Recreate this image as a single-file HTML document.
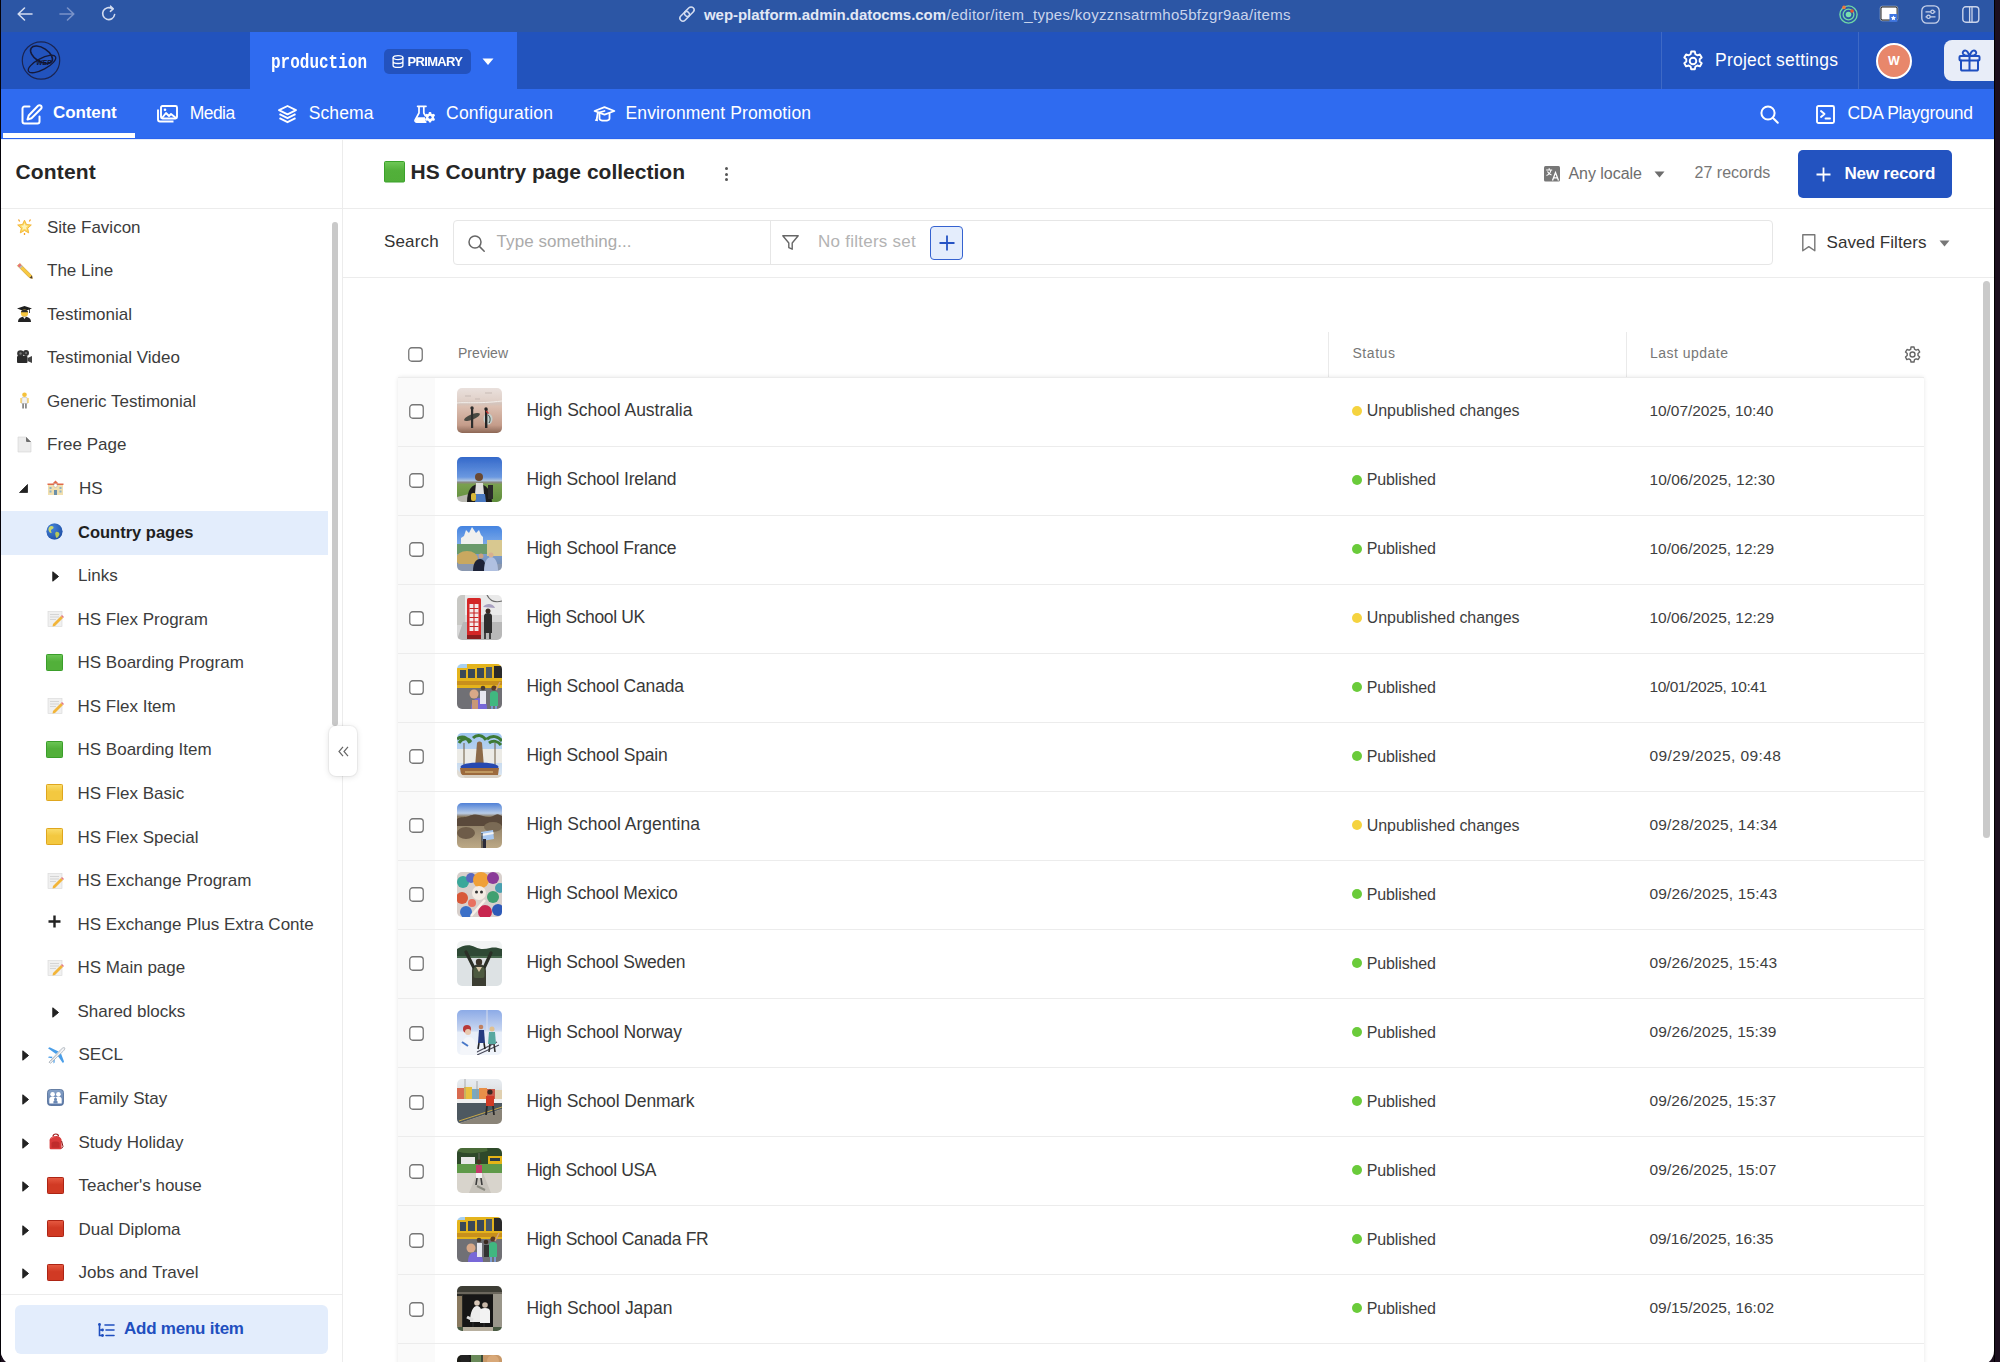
<!DOCTYPE html>
<html><head><meta charset="utf-8">
<style>
*{box-sizing:border-box;margin:0;padding:0}
html,body{width:2000px;height:1362px;overflow:hidden;background:#1c0f1e;font-family:"Liberation Sans",sans-serif}
#win{position:absolute;left:1px;top:0;width:1993px;height:1365px;background:#fff;border-radius:0 0 14px 14px;overflow:hidden}
#edgeL{position:absolute;left:0;top:0;width:1px;height:1362px;background:#050208}
#edgeR{position:absolute;left:1994px;top:0;width:1px;height:1362px;background:#000}
.abs{position:absolute}
.t{position:absolute;white-space:nowrap;line-height:1}
svg{position:absolute;overflow:visible}
</style></head><body>
<div id="edgeL"></div><div id="edgeR"></div>
<div id="win">
<div class="abs" style="left:0px;top:0px;width:1993px;height:32px;background:#2c56a5;"></div>
<svg style="left:16px;top:7px;" width="16" height="14" viewBox="0 0 16 14"><path d="M15 7H1.5M7.5 1L1.2 7l6.3 6" fill="none" stroke="#d3dcf0" stroke-width="1.6" stroke-linecap="round" stroke-linejoin="round"/></svg>
<svg style="left:58px;top:7px;" width="16" height="14" viewBox="0 0 16 14"><path d="M1 7h13.5M8.5 1l6.3 6-6.3 6" fill="none" stroke="#7a93c9" stroke-width="1.6" stroke-linecap="round" stroke-linejoin="round"/></svg>
<svg style="left:100px;top:5px;" width="17" height="18" viewBox="0 0 17 18"><path d="M13.6 9.5a6 6 0 1 1-2.2-5.6" fill="none" stroke="#d3dcf0" stroke-width="1.6" stroke-linecap="round"/><path d="M9.6 1.2l2.6 2.7-2.8 2.4" fill="none" stroke="#d3dcf0" stroke-width="1.6" stroke-linecap="round" stroke-linejoin="round"/></svg>
<svg style="left:678px;top:6px;" width="16" height="16" viewBox="0 0 16 16"><g fill="none" stroke="#d3dcf0" stroke-width="1.5"><rect x="7.3" y="0.2" width="6" height="11" rx="3" transform="rotate(45 10.3 5.7)"/><rect x="2.7" y="4.8" width="6" height="11" rx="3" transform="rotate(45 5.7 10.3)"/></g></svg>
<div class="t" style="left:703px;top:6.70px;font-size:15px;font-weight:bold;color:#e2e8f5;font-family:'Liberation Sans';letter-spacing:-0.047px;">wep-platform.admin.datocms.com</div>
<div class="t" style="left:945.5px;top:6.70px;font-size:15px;font-weight:normal;color:#c9d4ec;font-family:'Liberation Sans';letter-spacing:0.301px;">/editor/item_types/koyzznsatrmho5bfzgr9aa/items</div>
<svg style="left:1838px;top:5px;" width="19" height="19" viewBox="0 0 19 19"><circle cx="9.5" cy="9.5" r="8.6" fill="none" stroke="#6fd7a6" stroke-width="1.4"/><circle cx="9.5" cy="9.5" r="5.4" fill="none" stroke="#6fd7a6" stroke-width="1.3"/><circle cx="9.5" cy="9.5" r="2.8" fill="#79dfb0"/><circle cx="5" cy="2.4" r="1.8" fill="#f07a3a"/><circle cx="13" cy="6" r="1.8" fill="#e8552e"/></svg>
<svg style="left:1879px;top:6px;" width="19" height="17" viewBox="0 0 19 17"><rect x="0.8" y="0.8" width="16.5" height="13.5" rx="1.5" fill="#fff" stroke="#222" stroke-width="1.4"/><rect x="0.2" y="0.2" width="17.6" height="14.6" rx="2" fill="none" stroke="#cfd6e6" stroke-width="0.6"/><rect x="9.5" y="8" width="7.8" height="7.8" fill="#3d74e0"/><path d="M13.4 9.4l.8 1.7 1.8.2-1.3 1.2.4 1.8-1.7-.9-1.6.9.3-1.8-1.3-1.2 1.8-.2z" fill="#fff"/></svg>
<svg style="left:1920px;top:5px;" width="19" height="19" viewBox="0 0 19 19"><rect x="0.8" y="0.8" width="17.4" height="17.4" rx="5" fill="none" stroke="#c9d3ea" stroke-width="1.3"/><path d="M4.5 6.8h10M4.5 11.8h10" stroke="#c9d3ea" stroke-width="1.2"/><circle cx="11.5" cy="6.8" r="1.7" fill="#2c56a5" stroke="#c9d3ea" stroke-width="1.2"/><circle cx="7.5" cy="11.8" r="1.7" fill="#2c56a5" stroke="#c9d3ea" stroke-width="1.2"/></svg>
<svg style="left:1961px;top:6px;" width="18" height="17" viewBox="0 0 18 17"><rect x="0.8" y="0.8" width="16" height="15.4" rx="3" fill="none" stroke="#c9d3ea" stroke-width="1.4"/><path d="M7.6 1v15.2M10 1v15.2" stroke="#c9d3ea" stroke-width="1.3"/></svg>
<div class="abs" style="left:0px;top:32px;width:1993px;height:57px;background:#2253bd;"></div>
<svg style="left:20px;top:41px;" width="40" height="40" viewBox="0 0 40 40"><circle cx="20" cy="19.5" r="18.7" fill="none" stroke="#1b2552" stroke-width="1.2"/><ellipse cx="20.5" cy="13.8" rx="12.3" ry="6.8" transform="rotate(33 20.5 13.8)" fill="none" stroke="#15193a" stroke-width="1.6"/><ellipse cx="21" cy="23" rx="15.3" ry="5.6" transform="rotate(-28 21 23)" fill="none" stroke="#15193a" stroke-width="1.3"/><text x="15.3" y="23.6" font-family="Liberation Sans" font-weight="bold" font-style="italic" font-size="6.6" fill="#10142e">WEP</text></svg>
<div class="abs" style="left:249px;top:32px;width:267px;height:57px;background:#2f6bf0;"></div>
<div class="t" style="left:270px;top:52.80px;font-size:16px;font-weight:bold;color:#fff;font-family:'Liberation Mono';letter-spacing:-0.002px;transform:scaleY(1.22);transform-origin:0 0;">production</div>
<div class="abs" style="left:383px;top:49px;width:87px;height:25px;background:#2352be;border-radius:5px;"></div>
<svg style="left:391px;top:55px;" width="12" height="13" viewBox="0 0 12 13"><g fill="none" stroke="#fff" stroke-width="1.3"><ellipse cx="6" cy="2.6" rx="4.9" ry="2"/><path d="M1.1 2.6v7.8c0 1.1 2.2 2 4.9 2s4.9-.9 4.9-2V2.6M1.1 6.5c0 1.1 2.2 2 4.9 2s4.9-.9 4.9-2"/></g></svg>
<div class="t" style="left:406.5px;top:53.62px;font-size:13px;font-weight:bold;color:#fff;font-family:'Liberation Sans';letter-spacing:-0.661px;transform:scaleY(1.05);transform-origin:0 0;">PRIMARY</div>
<svg style="left:481px;top:58px;" width="12" height="8" viewBox="0 0 12 8"><path d="M0.5 0.5h11L6 7z" fill="#fff"/></svg>
<div class="abs" style="left:1660px;top:32px;width:1px;height:57px;background:rgba(255,255,255,0.13);"></div>
<div class="abs" style="left:1857px;top:32px;width:1px;height:57px;background:rgba(255,255,255,0.13);"></div>
<svg style="left:1681px;top:50px;" width="22" height="22" viewBox="0 0 22 22"><g fill="none" stroke="#fff" stroke-width="1.9" stroke-linejoin="round"><path d="M9.2 1.5h3.6l.6 2.7 1.9 1.1 2.6-.9 1.8 3.1-2 1.8v2.2l2 1.8-1.8 3.1-2.6-.9-1.9 1.1-.6 2.7H9.2l-.6-2.7-1.9-1.1-2.6.9-1.8-3.1 2-1.8V9.3l-2-1.8 1.8-3.1 2.6.9 1.9-1.1z"/><circle cx="11" cy="11" r="3.3"/></g></svg>
<div class="t" style="left:1714px;top:52.00px;font-size:17.5px;font-weight:normal;color:#fff;font-family:'Liberation Sans';letter-spacing:0.224px;">Project settings</div>
<svg style="left:1875px;top:43px;" width="36" height="36" viewBox="0 0 36 36"><circle cx="18" cy="18" r="17" fill="#e8876b" stroke="#fff" stroke-width="2"/><text x="18" y="22.2" text-anchor="middle" font-family="Liberation Sans" font-weight="bold" font-size="12.5" fill="#fff">W</text></svg>
<div class="abs" style="left:1943px;top:40px;width:60px;height:41px;background:#e8edf8;border-radius:8px 0 0 8px;"></div>
<svg style="left:1957px;top:49px;" width="23" height="23" viewBox="0 0 23 23"><g fill="none" stroke="#1f4fc0" stroke-width="2" stroke-linejoin="round" stroke-linecap="round"><rect x="1.5" y="7" width="20" height="4.6" rx="1"/><path d="M3 11.6v8.4a1.6 1.6 0 0 0 1.6 1.6h13.8a1.6 1.6 0 0 0 1.6-1.6v-8.4M11.5 7v14.6"/><path d="M11.5 7c-1.2-3.5-2.4-5.5-4.3-5.5-1.6 0-2.6 1.2-2.4 2.7.3 1.9 2.8 2.8 6.7 2.8zM11.5 7c1.2-3.5 2.4-5.5 4.3-5.5 1.6 0 2.6 1.2 2.4 2.7-.3 1.9-2.8 2.8-6.7 2.8z"/></g></svg>
<div class="abs" style="left:0px;top:89px;width:1993px;height:50px;background:#2f6bf0;"></div>
<div class="abs" style="left:2px;top:132.5px;width:132px;height:5px;background:#fff;"></div>
<svg style="left:20px;top:104px;" width="21" height="21" viewBox="0 0 21 21"><g fill="none" stroke="#fff" stroke-width="2" stroke-linecap="round" stroke-linejoin="round"><path d="M8.5 2.5H3.5a2 2 0 0 0-2 2v13a2 2 0 0 0 2 2h13a2 2 0 0 0 2-2v-5"/><path d="M17 1.8a2.1 2.1 0 0 1 3 3L10.5 14.3l-4 1.2 1.2-4z"/></g></svg>
<div class="t" style="left:52px;top:104.08px;font-size:17px;font-weight:bold;color:#fff;font-family:'Liberation Sans';letter-spacing:-0.086px;">Content</div>
<svg style="left:156px;top:105px;" width="21" height="17" viewBox="0 0 21 17"><g fill="none" stroke="#fff" stroke-width="1.9" stroke-linejoin="round"><rect x="4" y="1" width="16" height="12.5" rx="1.5"/><path d="M1 4.5v10a2 2 0 0 0 2 2h13.5"/><path d="M5 13l4-5 3 3 2-2 5 4"/></g><circle cx="8" cy="4.8" r="1.3" fill="#fff"/></svg>
<div class="t" style="left:188.7px;top:105.10px;font-size:17.5px;font-weight:normal;color:#fff;font-family:'Liberation Sans';letter-spacing:-0.543px;">Media</div>
<svg style="left:276.5px;top:105px;" width="19" height="19" viewBox="0 0 19 19"><g fill="none" stroke="#fff" stroke-width="1.9" stroke-linejoin="round"><path d="M9.5 1L18 5.2 9.5 9.4 1 5.2z"/><path d="M1.5 9.2l8 4 8-4M1.5 13.2l8 4 8-4"/></g></svg>
<div class="t" style="left:307.7px;top:105.10px;font-size:17.5px;font-weight:normal;color:#fff;font-family:'Liberation Sans';letter-spacing:0.099px;">Schema</div>
<svg style="left:413px;top:105px;" width="21" height="19" viewBox="0 0 21 19"><g fill="none" stroke="#fff" stroke-width="1.7" stroke-linejoin="round" stroke-linecap="round"><path d="M3.6 1.3h8.4M5 1.5v6.5L1.2 14.8c-.6 1.2.1 2.3 1.4 2.3h9.2M9.8 1.5v6.5l1.6 2.8"/></g><path d="M2.6 12.2h8.4l.8 5H1.2z" fill="#fff"/><g transform="translate(16 12.3)"><circle r="3.9" fill="#fff"/><g fill="#fff"><rect x="-1.3" y="-5.3" width="2.6" height="10.6" rx="0.8"/><rect x="-1.3" y="-5.3" width="2.6" height="10.6" rx="0.8" transform="rotate(60)"/><rect x="-1.3" y="-5.3" width="2.6" height="10.6" rx="0.8" transform="rotate(120)"/></g><circle r="1.5" fill="#2f6bf0"/></g></svg>
<div class="t" style="left:445px;top:105.10px;font-size:17.5px;font-weight:normal;color:#fff;font-family:'Liberation Sans';letter-spacing:0.241px;">Configuration</div>
<svg style="left:593px;top:105px;" width="21" height="17" viewBox="0 0 21 17"><g fill="none" stroke="#fff" stroke-width="1.8" stroke-linejoin="round" stroke-linecap="round"><path d="M0.6 6L10.5 2.2 20.4 6 10.5 9.6z"/><path d="M5.5 8.2v5.2c0 3 10 3 10 0V8.2"/><path d="M10.5 6L3.8 7.8 2.6 15"/></g><path d="M0.8 15.8l2-3.3 1.3 3.8z" fill="#fff"/></svg>
<div class="t" style="left:624.5px;top:105.10px;font-size:17.5px;font-weight:normal;color:#fff;font-family:'Liberation Sans';letter-spacing:0.131px;">Environment Promotion</div>
<svg style="left:1759px;top:105px;" width="19" height="19" viewBox="0 0 19 19"><g fill="none" stroke="#fff" stroke-width="2" stroke-linecap="round"><circle cx="8" cy="8" r="6.6"/><path d="M13 13l4.8 4.8"/></g></svg>
<svg style="left:1815px;top:105px;" width="19" height="19" viewBox="0 0 19 19"><g fill="none" stroke="#fff" stroke-width="1.9" stroke-linejoin="round" stroke-linecap="round"><rect x="1" y="1" width="17" height="17" rx="1.5"/><path d="M5 6l3.5 3L5 12M9.5 13.5h4.5"/></g></svg>
<div class="t" style="left:1846.5px;top:105.10px;font-size:17.5px;font-weight:normal;color:#fff;font-family:'Liberation Sans';letter-spacing:-0.299px;">CDA Playground</div>
<div class="abs" style="left:0px;top:138px;width:1993px;height:1px;background:#2a63ee;"></div>
<div class="abs" style="left:0px;top:139px;width:1993px;height:1px;background:#e6ecfa;"></div>
<div class="abs" style="left:0px;top:140px;width:342px;height:1222px;background:#fff;"></div>
<div class="abs" style="left:341px;top:139px;width:1px;height:1223px;background:#ececec;"></div>
<div class="t" style="left:14.5px;top:161.44px;font-size:21px;font-weight:bold;color:#262626;font-family:'Liberation Sans';letter-spacing:0.162px;">Content</div>
<div class="abs" style="left:0px;top:208px;width:1993px;height:1px;background:#ececec;"></div>
<div class="abs" style="left:0px;top:511px;width:327px;height:44px;background:#e3edfc;"></div>
<svg style="left:15px;top:218.0px;" width="17" height="17" viewBox="0 0 17 17"><path d="M8.5 2.2l2 4.3 4.8.5-3.6 3.2 1 4.7-4.2-2.4-4.2 2.4 1-4.7L1.7 7l4.8-.5z" fill="#fbd860" stroke="#f3b331" stroke-width="0.9" stroke-linejoin="round"/><path d="M8.5 5l1 2.5 2.6.3-2 1.7.6 2.6-2.2-1.3-2.2 1.3.6-2.6-2-1.7 2.6-.3z" fill="#fff3b8"/><path d="M2.5 1.5l1.2 2M14.5 1.5l-1.2 2M8.5 15v2" stroke="#f3a32a" stroke-width="1.3"/></svg>
<div class="t" style="left:46px;top:218.58px;font-size:17px;font-weight:normal;color:#3c3c3c;font-family:'Liberation Sans';">Site Favicon</div>
<svg style="left:15px;top:261.6px;" width="17" height="17" viewBox="0 0 17 17"><path d="M1.5 3.8L3.8 1.5l11.7 11.7.9 3.2-3.2-.9z" fill="#f7c940" stroke="#c8901a" stroke-width="0.6"/><path d="M1.5 3.8L3.8 1.5l1.8 1.8-2.3 2.3z" fill="#e7717d"/><path d="M3.3 5.6l2.3-2.3 1 1-2.3 2.3z" fill="#b0b8c8"/><path d="M13.6 16l2.8.4-.4-2.8z" fill="#4a3a30"/></svg>
<div class="t" style="left:46px;top:262.15px;font-size:17px;font-weight:normal;color:#3c3c3c;font-family:'Liberation Sans';">The Line</div>
<svg style="left:15px;top:305.1px;" width="17" height="17" viewBox="0 0 17 17"><path d="M1 3.6L8.5 1 16 3.6 8.5 6.2z" fill="#1e1e1e"/><path d="M13.5 4v4" stroke="#1e1e1e" stroke-width="0.8"/><circle cx="8.5" cy="8.2" r="3.6" fill="#f6c63e"/><path d="M4.9 7.2c.5-1.8 1.8-2.4 3.6-2.4s3.1.6 3.6 2.4z" fill="#2a2a2a"/><path d="M2 17c0-3.8 2.8-5.3 6.5-5.3S15 13.2 15 17z" fill="#222"/><path d="M7 11.8l1.5 2.2 1.5-2.2z" fill="#f0f0f0"/></svg>
<div class="t" style="left:46px;top:305.72px;font-size:17px;font-weight:normal;color:#3c3c3c;font-family:'Liberation Sans';">Testimonial</div>
<svg style="left:15px;top:348.7px;" width="17" height="17" viewBox="0 0 17 17"><circle cx="4.5" cy="4.5" r="3.3" fill="#333"/><circle cx="10" cy="4" r="3" fill="#333"/><rect x="1" y="7" width="10.5" height="7" rx="1" fill="#2a2a2a"/><path d="M11.5 9l4.5-2v7l-4.5-2z" fill="#444"/><circle cx="4.5" cy="4.5" r="1.2" fill="#777"/><circle cx="10" cy="4" r="1.1" fill="#777"/></svg>
<div class="t" style="left:46px;top:349.29px;font-size:17px;font-weight:normal;color:#3c3c3c;font-family:'Liberation Sans';">Testimonial Video</div>
<svg style="left:15px;top:392.3px;" width="17" height="17" viewBox="0 0 17 17"><circle cx="8.5" cy="2.8" r="2.3" fill="#f4c13a"/><path d="M6 5.5h5l.5 6H5.5z" fill="#f2f2f2" stroke="#b8b8b8" stroke-width="0.5"/><path d="M6.2 11.5h1.8v5H6.2zM9 11.5h1.8v5H9z" fill="#8a8a8a"/><path d="M5 6v5M12 6v5" stroke="#f4c13a" stroke-width="1.1"/></svg>
<div class="t" style="left:46px;top:392.86px;font-size:17px;font-weight:normal;color:#3c3c3c;font-family:'Liberation Sans';">Generic Testimonial</div>
<svg style="left:15px;top:435.8px;" width="17" height="17" viewBox="0 0 17 17"><path d="M2 1h8l5 5v10H2z" fill="#ececec" stroke="#d4d4d4" stroke-width="0.6"/><path d="M10 1c0 3 1 5 5 5" fill="#9a9a9a"/><path d="M10 1l5 5h-3.5c-1 0-1.5-.5-1.5-1.5z" fill="#6e6e6e"/></svg>
<div class="t" style="left:46px;top:436.43px;font-size:17px;font-weight:normal;color:#3c3c3c;font-family:'Liberation Sans';">Free Page</div>
<svg style="left:46px;top:479.4px;" width="17" height="17" viewBox="0 0 17 17"><path d="M0.5 4.5h16v1.5H0.5z" fill="#e06a4a"/><path d="M1 6h15v10H1z" fill="#f1dfae"/><path d="M5.5 4.5l3-3 3 3z" fill="#e06a4a"/><circle cx="8.5" cy="6.5" r="1.8" fill="#fff" stroke="#999" stroke-width="0.4"/><path d="M2.5 8h2v2h-2zM12.5 8h2v2h-2zM2.5 11.5h2v2h-2zM12.5 11.5h2v2h-2z" fill="#8fb3c8"/><path d="M7 11h3v5H7z" fill="#6b8fa8"/></svg>
<svg style="left:18px;top:483.9px;" width="9" height="9" viewBox="0 0 9 9"><path d="M8.5 0.5V8.5H0.5z" fill="#222" stroke="#222" stroke-width="0.8" stroke-linejoin="round"/></svg>
<div class="t" style="left:78px;top:480.00px;font-size:17px;font-weight:normal;color:#3c3c3c;font-family:'Liberation Sans';">HS</div>
<svg style="left:45px;top:523.0px;" width="17" height="17" viewBox="0 0 17 17"><circle cx="8.5" cy="8.5" r="8" fill="#2c64c2"/><circle cx="8.5" cy="8.5" r="8" fill="url(#gg)"/><path d="M4 3.5c2-1 4 0 3.5 1.5-.5 1.2-2 1-2.5 2.2-.4 1 .8 1.5.5 2.5C5 11 3 9 2.5 7 2.2 5.5 3 4 4 3.5z" fill="#c9d66b"/><path d="M10 9c1.5-.5 3 .5 3.5 2-.3 1.8-1.5 3.5-3 4-.8-1-1-2.5-1.2-3.5-.2-1 0-2 .7-2.5z" fill="#b7c85a"/><defs><radialGradient id="gg" cx="0.35" cy="0.3" r="0.8"><stop offset="0" stop-color="#5aa0f0" stop-opacity="0.5"/><stop offset="1" stop-color="#123a8a" stop-opacity="0.6"/></radialGradient></defs></svg>
<div class="t" style="left:77px;top:524.15px;font-size:16.5px;font-weight:bold;color:#1f1f1f;font-family:'Liberation Sans';letter-spacing:-0.003px;">Country pages</div>
<svg style="left:51px;top:571.1px;" width="7" height="11" viewBox="0 0 7 11"><path d="M0.8 0.8L6.5 5.5 0.8 10.2z" fill="#222" stroke="#222" stroke-width="1" stroke-linejoin="round"/></svg>
<div class="t" style="left:77px;top:567.14px;font-size:17px;font-weight:normal;color:#3c3c3c;font-family:'Liberation Sans';">Links</div>
<svg style="left:45.5px;top:610.1px;" width="17" height="18" viewBox="0 0 17 18"><rect x="1" y="1.5" width="14" height="15" fill="#f0f0f0" stroke="#d8d8d8" stroke-width="0.6"/><path d="M3 4.5h9M3 7h9M3 9.5h6" stroke="#c8c8c8" stroke-width="0.7"/><path d="M6 14l8-8 2 2-8 8-2.5.5z" fill="#f2b53a"/><path d="M14 6l1-1 2 2-1 1z" fill="#e47a84"/></svg>
<div class="t" style="left:76.5px;top:610.71px;font-size:17px;font-weight:normal;color:#3c3c3c;font-family:'Liberation Sans';">HS Flex Program</div>
<svg style="left:45px;top:653.7px;" width="17" height="17" viewBox="0 0 17 17"><defs><linearGradient id="gsq" x1="0" y1="0" x2="0" y2="1"><stop offset="0" stop-color="#6cc656"/><stop offset="0.45" stop-color="#52b03a"/><stop offset="1" stop-color="#52b03a"/></linearGradient></defs><rect x="0.5" y="0.5" width="16" height="16" rx="0.8" fill="url(#gsq)" stroke="#3a9e2a" stroke-width="1"/></svg>
<div class="t" style="left:76.5px;top:654.28px;font-size:17px;font-weight:normal;color:#3c3c3c;font-family:'Liberation Sans';">HS Boarding Program</div>
<svg style="left:45.5px;top:697.3px;" width="17" height="18" viewBox="0 0 17 18"><rect x="1" y="1.5" width="14" height="15" fill="#f0f0f0" stroke="#d8d8d8" stroke-width="0.6"/><path d="M3 4.5h9M3 7h9M3 9.5h6" stroke="#c8c8c8" stroke-width="0.7"/><path d="M6 14l8-8 2 2-8 8-2.5.5z" fill="#f2b53a"/><path d="M14 6l1-1 2 2-1 1z" fill="#e47a84"/></svg>
<div class="t" style="left:76.5px;top:697.85px;font-size:17px;font-weight:normal;color:#3c3c3c;font-family:'Liberation Sans';">HS Flex Item</div>
<svg style="left:45px;top:740.8px;" width="17" height="17" viewBox="0 0 17 17"><defs><linearGradient id="gsq" x1="0" y1="0" x2="0" y2="1"><stop offset="0" stop-color="#6cc656"/><stop offset="0.45" stop-color="#52b03a"/><stop offset="1" stop-color="#52b03a"/></linearGradient></defs><rect x="0.5" y="0.5" width="16" height="16" rx="0.8" fill="url(#gsq)" stroke="#3a9e2a" stroke-width="1"/></svg>
<div class="t" style="left:76.5px;top:741.42px;font-size:17px;font-weight:normal;color:#3c3c3c;font-family:'Liberation Sans';">HS Boarding Item</div>
<svg style="left:45px;top:784.4px;" width="17" height="17" viewBox="0 0 17 17"><defs><linearGradient id="ysq" x1="0" y1="0" x2="0" y2="1"><stop offset="0" stop-color="#fadd6c"/><stop offset="0.45" stop-color="#f3c840"/><stop offset="1" stop-color="#f3c840"/></linearGradient></defs><rect x="0.5" y="0.5" width="16" height="16" rx="0.8" fill="url(#ysq)" stroke="#dfa61e" stroke-width="1"/></svg>
<div class="t" style="left:76.5px;top:784.99px;font-size:17px;font-weight:normal;color:#3c3c3c;font-family:'Liberation Sans';">HS Flex Basic</div>
<svg style="left:45px;top:828.0px;" width="17" height="17" viewBox="0 0 17 17"><defs><linearGradient id="ysq" x1="0" y1="0" x2="0" y2="1"><stop offset="0" stop-color="#fadd6c"/><stop offset="0.45" stop-color="#f3c840"/><stop offset="1" stop-color="#f3c840"/></linearGradient></defs><rect x="0.5" y="0.5" width="16" height="16" rx="0.8" fill="url(#ysq)" stroke="#dfa61e" stroke-width="1"/></svg>
<div class="t" style="left:76.5px;top:828.56px;font-size:17px;font-weight:normal;color:#3c3c3c;font-family:'Liberation Sans';">HS Flex Special</div>
<svg style="left:45.5px;top:871.5px;" width="17" height="18" viewBox="0 0 17 18"><rect x="1" y="1.5" width="14" height="15" fill="#f0f0f0" stroke="#d8d8d8" stroke-width="0.6"/><path d="M3 4.5h9M3 7h9M3 9.5h6" stroke="#c8c8c8" stroke-width="0.7"/><path d="M6 14l8-8 2 2-8 8-2.5.5z" fill="#f2b53a"/><path d="M14 6l1-1 2 2-1 1z" fill="#e47a84"/></svg>
<div class="t" style="left:76.5px;top:872.13px;font-size:17px;font-weight:normal;color:#3c3c3c;font-family:'Liberation Sans';">HS Exchange Program</div>
<svg style="left:47px;top:915.1px;" width="13" height="13" viewBox="0 0 13 13"><path d="M6.5 0.5v12M0.5 6.5h12" stroke="#222" stroke-width="2.4"/></svg>
<div class="t" style="left:76.5px;top:915.70px;font-size:17px;font-weight:normal;color:#3c3c3c;font-family:'Liberation Sans';">HS Exchange Plus Extra Conte</div>
<svg style="left:45.5px;top:958.7px;" width="17" height="18" viewBox="0 0 17 18"><rect x="1" y="1.5" width="14" height="15" fill="#f0f0f0" stroke="#d8d8d8" stroke-width="0.6"/><path d="M3 4.5h9M3 7h9M3 9.5h6" stroke="#c8c8c8" stroke-width="0.7"/><path d="M6 14l8-8 2 2-8 8-2.5.5z" fill="#f2b53a"/><path d="M14 6l1-1 2 2-1 1z" fill="#e47a84"/></svg>
<div class="t" style="left:76.5px;top:959.27px;font-size:17px;font-weight:normal;color:#3c3c3c;font-family:'Liberation Sans';">HS Main page</div>
<svg style="left:51px;top:1006.8px;" width="7" height="11" viewBox="0 0 7 11"><path d="M0.8 0.8L6.5 5.5 0.8 10.2z" fill="#222" stroke="#222" stroke-width="1" stroke-linejoin="round"/></svg>
<div class="t" style="left:76.5px;top:1002.84px;font-size:17px;font-weight:normal;color:#3c3c3c;font-family:'Liberation Sans';">Shared blocks</div>
<svg style="left:45.5px;top:1045.8px;" width="18" height="18" viewBox="0 0 18 18"><path d="M9 8L1 2.2 2.6 1.2 11.5 5.5z" fill="#4a9ee8"/><path d="M10.5 9.5L16 17.2l1-1.6-3.4-9z" fill="#4a9ee8"/><path d="M4.8 12.3L1 11.5l.9-1 3.6.3zM6.2 13.7L6.6 17.5l1-.9.1-3.5z" fill="#4a9ee8"/><path d="M2 16.2L14.2 3.2c1.4-1.4 2.9-1.9 3.4-1.4.5.5 0 2-1.4 3.4L3.6 17.2z" fill="#f4f5f7" stroke="#98a2ac" stroke-width="0.7"/><path d="M4 15.2l9.8-10.6" stroke="#c8cdd2" stroke-width="0.8"/></svg>
<svg style="left:20.5px;top:1050.3px;" width="7" height="11" viewBox="0 0 7 11"><path d="M0.8 0.8L6.5 5.5 0.8 10.2z" fill="#222" stroke="#222" stroke-width="1" stroke-linejoin="round"/></svg>
<div class="t" style="left:77.5px;top:1046.41px;font-size:17px;font-weight:normal;color:#3c3c3c;font-family:'Liberation Sans';">SECL</div>
<svg style="left:46px;top:1089.4px;" width="17" height="17" viewBox="0 0 17 17"><defs><linearGradient id="fam" x1="0" y1="0" x2="0" y2="1"><stop offset="0" stop-color="#86a2c8"/><stop offset="1" stop-color="#5a78a8"/></linearGradient></defs><rect x="0.5" y="0.5" width="16" height="16" rx="3" fill="url(#fam)" stroke="#4e6a94" stroke-width="0.8"/><g fill="#fff"><circle cx="5.6" cy="5.2" r="2.3"/><circle cx="11.4" cy="5.2" r="2.3"/><path d="M2.3 14.5V10.2c0-1.5 1.5-2.6 3.3-2.6s3.3 1.1 3.3 2.6v4.3zM8.1 14.5v-4.3c0-1.5 1.5-2.6 3.3-2.6s3.3 1.1 3.3 2.6v4.3z"/></g><circle cx="8.5" cy="10.3" r="1.5" fill="#6a88b4"/><path d="M6.4 14.5v-1.7c0-1 1-1.6 2.1-1.6s2.1.6 2.1 1.6v1.7z" fill="#6a88b4"/></svg>
<svg style="left:20.5px;top:1093.9px;" width="7" height="11" viewBox="0 0 7 11"><path d="M0.8 0.8L6.5 5.5 0.8 10.2z" fill="#222" stroke="#222" stroke-width="1" stroke-linejoin="round"/></svg>
<div class="t" style="left:77.5px;top:1089.98px;font-size:17px;font-weight:normal;color:#3c3c3c;font-family:'Liberation Sans';">Family Stay</div>
<svg style="left:46px;top:1133.0px;" width="17" height="17" viewBox="0 0 17 17"><path d="M6 3.5c0-1.6 1.2-2.5 2.8-2.5s2.7.9 2.7 2.5" fill="none" stroke="#9a1e1e" stroke-width="1.2"/><path d="M2.6 7.5c0-2.8 2.6-4.6 6-4.6s6 1.8 6 4.6v7.2c0 1-.7 1.6-1.6 1.6H4.2c-.9 0-1.6-.6-1.6-1.6z" fill="#d83a3a"/><path d="M4.5 10.5c0-1.4 1.8-2 4-2s4 .6 4 2v4.2H4.5z" fill="#c02c2c"/><path d="M14.6 8l1.4 5.5-1.4 2" fill="none" stroke="#8a1a1a" stroke-width="1"/><path d="M4 5.5c1.2-1.3 2.8-1.9 4.6-1.9" fill="none" stroke="#f07a7a" stroke-width="0.8"/></svg>
<svg style="left:20.5px;top:1137.5px;" width="7" height="11" viewBox="0 0 7 11"><path d="M0.8 0.8L6.5 5.5 0.8 10.2z" fill="#222" stroke="#222" stroke-width="1" stroke-linejoin="round"/></svg>
<div class="t" style="left:77.5px;top:1133.55px;font-size:17px;font-weight:normal;color:#3c3c3c;font-family:'Liberation Sans';">Study Holiday</div>
<svg style="left:46px;top:1176.5px;" width="17" height="17" viewBox="0 0 17 17"><defs><linearGradient id="rsq" x1="0" y1="0" x2="0" y2="1"><stop offset="0" stop-color="#e65a42"/><stop offset="0.45" stop-color="#d13a24"/><stop offset="1" stop-color="#d13a24"/></linearGradient></defs><rect x="0.5" y="0.5" width="16" height="16" rx="0.8" fill="url(#rsq)" stroke="#ad2414" stroke-width="1"/></svg>
<svg style="left:20.5px;top:1181.0px;" width="7" height="11" viewBox="0 0 7 11"><path d="M0.8 0.8L6.5 5.5 0.8 10.2z" fill="#222" stroke="#222" stroke-width="1" stroke-linejoin="round"/></svg>
<div class="t" style="left:77.5px;top:1177.12px;font-size:17px;font-weight:normal;color:#3c3c3c;font-family:'Liberation Sans';">Teacher's house</div>
<svg style="left:46px;top:1220.1px;" width="17" height="17" viewBox="0 0 17 17"><defs><linearGradient id="rsq" x1="0" y1="0" x2="0" y2="1"><stop offset="0" stop-color="#e65a42"/><stop offset="0.45" stop-color="#d13a24"/><stop offset="1" stop-color="#d13a24"/></linearGradient></defs><rect x="0.5" y="0.5" width="16" height="16" rx="0.8" fill="url(#rsq)" stroke="#ad2414" stroke-width="1"/></svg>
<svg style="left:20.5px;top:1224.6px;" width="7" height="11" viewBox="0 0 7 11"><path d="M0.8 0.8L6.5 5.5 0.8 10.2z" fill="#222" stroke="#222" stroke-width="1" stroke-linejoin="round"/></svg>
<div class="t" style="left:77.5px;top:1220.69px;font-size:17px;font-weight:normal;color:#3c3c3c;font-family:'Liberation Sans';">Dual Diploma</div>
<svg style="left:46px;top:1263.7px;" width="17" height="17" viewBox="0 0 17 17"><defs><linearGradient id="rsq" x1="0" y1="0" x2="0" y2="1"><stop offset="0" stop-color="#e65a42"/><stop offset="0.45" stop-color="#d13a24"/><stop offset="1" stop-color="#d13a24"/></linearGradient></defs><rect x="0.5" y="0.5" width="16" height="16" rx="0.8" fill="url(#rsq)" stroke="#ad2414" stroke-width="1"/></svg>
<svg style="left:20.5px;top:1268.2px;" width="7" height="11" viewBox="0 0 7 11"><path d="M0.8 0.8L6.5 5.5 0.8 10.2z" fill="#222" stroke="#222" stroke-width="1" stroke-linejoin="round"/></svg>
<div class="t" style="left:77.5px;top:1264.26px;font-size:17px;font-weight:normal;color:#3c3c3c;font-family:'Liberation Sans';">Jobs and Travel</div>
<div class="abs" style="left:331px;top:222px;width:6px;height:504px;background:#c9c9c9;border-radius:3px;"></div>
<div class="abs" style="left:328px;top:726px;width:28px;height:50px;background:#fff;border-radius:7px;box-shadow:0 1px 6px rgba(0,0,0,0.12),0 0 0 1px rgba(0,0,0,0.04);"></div>
<svg style="left:337px;top:746px;" width="11" height="11" viewBox="0 0 11 11"><path d="M5 0.8L1 5.5 5 10.2M10 0.8L6 5.5 10 10.2" fill="none" stroke="#666" stroke-width="1.2"/></svg>
<div class="abs" style="left:0px;top:1294px;width:341px;height:1px;background:#ececec;"></div>
<div class="abs" style="left:14px;top:1305px;width:313px;height:49px;background:#e3edfc;border-radius:6px;"></div>
<svg style="left:97px;top:1323px;" width="17" height="14" viewBox="0 0 17 14"><g fill="none" stroke="#1f4fbf" stroke-width="1.6" stroke-linecap="round"><path d="M1.5 1.5v11h3M1.5 7h3M7 2h9M8 7h8M8 12.5h8"/></g><circle cx="1.5" cy="1.5" r="1.4" fill="#1f4fbf"/><circle cx="4.5" cy="7" r="1.4" fill="#1f4fbf"/><circle cx="4.5" cy="12.5" r="1.4" fill="#1f4fbf"/></svg>
<div class="t" style="left:123px;top:1320.08px;font-size:17px;font-weight:bold;color:#1f4fbf;font-family:'Liberation Sans';letter-spacing:-0.233px;">Add menu item</div>
<svg style="left:383px;top:161px;" width="21" height="21.5" viewBox="0 0 21 21.5"><defs><linearGradient id="tsq" x1="0" y1="0" x2="0" y2="1"><stop offset="0" stop-color="#70c858"/><stop offset="0.45" stop-color="#52b03a"/><stop offset="1" stop-color="#50ae38"/></linearGradient></defs><rect x="0.5" y="0.5" width="20" height="20.5" rx="1" fill="url(#tsq)" stroke="#3aa22a" stroke-width="1"/></svg>
<div class="t" style="left:409.6px;top:161.34px;font-size:21px;font-weight:bold;color:#262626;font-family:'Liberation Sans';letter-spacing:0.008px;">HS Country page collection</div>
<div class="abs" style="left:723.5px;top:167.0px;width:3px;height:3px;background:#555;border-radius:50%;"></div>
<div class="abs" style="left:723.5px;top:172.5px;width:3px;height:3px;background:#555;border-radius:50%;"></div>
<div class="abs" style="left:723.5px;top:178.0px;width:3px;height:3px;background:#555;border-radius:50%;"></div>
<svg style="left:1543px;top:166px;" width="16" height="16" viewBox="0 0 16 16"><rect x="0" y="0" width="16" height="15.5" rx="1.5" fill="#777"/><path d="M2.2 4h6M5.2 2.2v1.8M7 4c-.5 2.5-2 4.5-4.5 5.5M3.5 5.5c.8 1.8 2.5 3 4 3.5" fill="none" stroke="#fff" stroke-width="1.1"/><path d="M8.5 14.5l3-8 3 8M9.6 11.8h3.8" fill="none" stroke="#fff" stroke-width="1.3"/></svg>
<div class="t" style="left:1567.4px;top:166.44px;font-size:16px;font-weight:normal;color:#6d6d6d;font-family:'Liberation Sans';letter-spacing:-0.025px;">Any locale</div>
<svg style="left:1652.5px;top:171px;" width="11" height="7" viewBox="0 0 11 7"><path d="M0.5 0.5h10L5.5 6.5z" fill="#6d6d6d"/></svg>
<div class="t" style="left:1693.5px;top:165.44px;font-size:16px;font-weight:normal;color:#777;font-family:'Liberation Sans';letter-spacing:0.023px;">27 records</div>
<div class="abs" style="left:1797px;top:149.5px;width:154px;height:48.5px;background:#2353c0;border-radius:5px;"></div>
<svg style="left:1815px;top:167px;" width="15" height="15" viewBox="0 0 15 15"><path d="M7.5 0.5v14M0.5 7.5h14" stroke="#fff" stroke-width="1.8"/></svg>
<div class="t" style="left:1843.4px;top:165.28px;font-size:17px;font-weight:bold;color:#fff;font-family:'Liberation Sans';letter-spacing:-0.177px;">New record</div>
<div class="t" style="left:383px;top:233.48px;font-size:17px;font-weight:normal;color:#333;font-family:'Liberation Sans';letter-spacing:0.145px;">Search</div>
<div class="abs" style="left:452px;top:220px;width:1320px;height:45px;background:#fff;border:1px solid #e6e6e6;border-radius:4px;"></div>
<svg style="left:466.5px;top:234.5px;" width="17" height="17" viewBox="0 0 17 17"><g fill="none" stroke="#666" stroke-width="1.5" stroke-linecap="round"><circle cx="7" cy="7" r="6"/><path d="M11.4 11.4l4.8 4.8"/></g></svg>
<div class="t" style="left:495.6px;top:233.28px;font-size:17px;font-weight:normal;color:#ababab;font-family:'Liberation Sans';letter-spacing:0.051px;">Type something...</div>
<div class="abs" style="left:769px;top:220px;width:1px;height:45px;background:#e6e6e6;"></div>
<svg style="left:781px;top:235px;" width="17" height="15" viewBox="0 0 17 15"><path d="M0.8 0.8h15.4L10.2 8v6.2L6.8 12.6V8z" fill="none" stroke="#666" stroke-width="1.4" stroke-linejoin="round"/></svg>
<div class="t" style="left:817px;top:233.28px;font-size:17px;font-weight:normal;color:#b3b3b3;font-family:'Liberation Sans';letter-spacing:0.255px;">No filters set</div>
<div class="abs" style="left:929px;top:225.5px;width:33px;height:34.5px;background:#e4edfc;border:1.5px solid #3562d0;border-radius:4px;"></div>
<svg style="left:938px;top:235px;" width="16" height="16" viewBox="0 0 16 16"><path d="M8 0.5v15M0.5 8h15" stroke="#2553c4" stroke-width="1.8"/></svg>
<svg style="left:1801px;top:234px;" width="14" height="18" viewBox="0 0 14 18"><path d="M0.8 0.8h12v16l-6-4.2-6 4.2z" fill="none" stroke="#777" stroke-width="1.4" stroke-linejoin="round"/></svg>
<div class="t" style="left:1825.5px;top:233.88px;font-size:17px;font-weight:normal;color:#333;font-family:'Liberation Sans';letter-spacing:0.066px;">Saved Filters</div>
<svg style="left:1937.5px;top:240px;" width="11" height="7" viewBox="0 0 11 7"><path d="M0.5 0.5h10L5.5 6.5z" fill="#777"/></svg>
<div class="abs" style="left:342px;top:277px;width:1651px;height:1px;background:#ececec;"></div>
<div class="abs" style="left:1982px;top:281px;width:7px;height:557px;background:#cacaca;border-radius:3.5px;"></div>
<svg style="left:407px;top:347px;" width="15" height="15" viewBox="0 0 15 15"><rect x="0.75" y="0.75" width="13.5" height="13.5" rx="3" fill="#fff" stroke="#777" stroke-width="1.3"/></svg>
<div class="t" style="left:457px;top:345.76px;font-size:14px;font-weight:normal;color:#777;font-family:'Liberation Sans';letter-spacing:0.034px;">Preview</div>
<div class="abs" style="left:1327px;top:332px;width:1px;height:44.5px;background:#eaeaea;"></div>
<div class="abs" style="left:1625px;top:332px;width:1px;height:44.5px;background:#eaeaea;"></div>
<div class="t" style="left:1351.4px;top:345.96px;font-size:14px;font-weight:normal;color:#777;font-family:'Liberation Sans';letter-spacing:0.579px;">Status</div>
<div class="t" style="left:1649px;top:345.76px;font-size:14px;font-weight:normal;color:#777;font-family:'Liberation Sans';letter-spacing:0.483px;">Last update</div>
<svg style="left:1903px;top:345.5px;" width="17" height="17" viewBox="0 0 17 17"><g fill="none" stroke="#666" stroke-width="1.4" stroke-linejoin="round"><path d="M7 1h3l.5 2.2 1.6.9 2.1-.7 1.5 2.6-1.7 1.5v1.9l1.7 1.5-1.5 2.6-2.1-.7-1.6.9L10 16H7l-.5-2.2-1.6-.9-2.1.7-1.3-2.6 1.7-1.5V7.6L1.5 6.1 3 3.5l2.1.7 1.6-.9z"/><circle cx="8.5" cy="8.5" r="2.5"/></g></svg>
<div class="abs" style="left:396.5px;top:376.5px;width:1526.5px;height:1006px;background:#fff;box-shadow:0 0 4px rgba(0,0,0,0.10);border-radius:3px 3px 0 0;"></div>
<div class="abs" style="left:396.5px;top:376.5px;width:37px;height:1006px;background:#fafafa;"></div>
<div class="abs" style="left:396.5px;top:376.5px;width:1526.5px;height:1px;background:#ececec;"></div>
<svg style="left:408px;top:403.9px;" width="15" height="15" viewBox="0 0 15 15"><rect x="0.75" y="0.75" width="13.5" height="13.5" rx="3" fill="#fff" stroke="#777" stroke-width="1.3"/></svg>
<div class="abs" style="left:456.3px;top:388.10px;width:45px;height:45px;border-radius:5px;overflow:hidden"><svg style="position:static;display:block" width="45" height="45" viewBox="0 0 45 45"><defs><filter id="bl0" x="-5%" y="-5%" width="110%" height="110%"><feGaussianBlur stdDeviation="0.45"/></filter></defs><g filter="url(#bl0)"><defs><linearGradient id="g0" x1="0" y1="0" x2="0" y2="1"><stop offset="0" stop-color="#ebe3e0"/><stop offset="0.3" stop-color="#e0d0c8"/><stop offset="0.36" stop-color="#d4c4bc"/><stop offset="0.42" stop-color="#dcc0b2"/><stop offset="0.8" stop-color="#c49c8a"/><stop offset="1" stop-color="#7e5a48"/></linearGradient></defs><rect x="-2" y="-2" width="49" height="49" fill="url(#g0)"/><path d="M0 15c8-1 20 1 45-2" stroke="#f2eeea" stroke-width="1" fill="none"/><path d="M8 8h6M28 5h7M18 11h5" stroke="#c0b4ae" stroke-width="0.8"/><ellipse cx="15" cy="29" rx="8.5" ry="2.6" transform="rotate(-22 15 29)" fill="#4a4a42"/><ellipse cx="31" cy="31" rx="4.5" ry="5.5" fill="#c4d0cc"/><path d="M31 27c2 1 3 5 1 8" stroke="#3a4a48" stroke-width="1" fill="none"/><rect x="14" y="20" width="2.2" height="20" fill="#2e2e2e"/><circle cx="15" cy="20" r="1.7" fill="#2e2e2e"/><rect x="28" y="21" width="2.4" height="19" fill="#262626"/><circle cx="29" cy="21" r="1.7" fill="#262626"/><path d="M29 23l2.5 2.5" stroke="#c83030" stroke-width="1.2"/></g></svg></div>
<div class="t" style="left:525.4px;top:401.90px;font-size:17.5px;font-weight:normal;color:#383838;font-family:'Liberation Sans';letter-spacing:-0.013px;">High School Australia</div>
<div class="abs" style="left:1350.5px;top:405.5px;width:10px;height:10px;background:#f5d33f;border-radius:50%;"></div>
<div class="t" style="left:1365.8px;top:403.24px;font-size:16px;font-weight:normal;color:#3e3e3e;font-family:'Liberation Sans';letter-spacing:-0.066px;">Unpublished changes</div>
<div class="t" style="left:1648.5px;top:402.52px;font-size:15.5px;font-weight:normal;color:#3e3e3e;font-family:'Liberation Sans';letter-spacing:-0.062px;">10/07/2025, 10:40</div>
<div class="abs" style="left:396.5px;top:445.57px;width:1526.5px;height:1px;background:#ececec;"></div>
<svg style="left:408px;top:472.97px;" width="15" height="15" viewBox="0 0 15 15"><rect x="0.75" y="0.75" width="13.5" height="13.5" rx="3" fill="#fff" stroke="#777" stroke-width="1.3"/></svg>
<div class="abs" style="left:456.3px;top:457.17px;width:45px;height:45px;border-radius:5px;overflow:hidden"><svg style="position:static;display:block" width="45" height="45" viewBox="0 0 45 45"><defs><filter id="bl1" x="-5%" y="-5%" width="110%" height="110%"><feGaussianBlur stdDeviation="0.45"/></filter></defs><g filter="url(#bl1)"><defs><linearGradient id="g1" x1="0" y1="0" x2="0" y2="1"><stop offset="0" stop-color="#2f64c8"/><stop offset="0.45" stop-color="#6a98e0"/><stop offset="0.52" stop-color="#a8c0e0"/><stop offset="0.56" stop-color="#8a8a80"/><stop offset="0.6" stop-color="#7aa050"/><stop offset="1" stop-color="#5c8c3a"/></linearGradient></defs><rect x="-2" y="-2" width="49" height="49" fill="url(#g1)"/><path d="M0 40l12-3v8H0z" fill="#b8b8b0"/><path d="M10 45c0-12 5-18 12-18s12 6 13 18z" fill="#1e1e1e"/><circle cx="22" cy="20" r="4" fill="#6a4a32"/><path d="M19 26h7l1 11h-9z" fill="#e0e0e0"/><path d="M19 37h9l1 8h-11z" fill="#4a78c0"/><rect x="14" y="36" width="5" height="8" rx="2" fill="#d8b838"/><path d="M31 28h5v14h-5z" fill="#2a2a2a"/></g></svg></div>
<div class="t" style="left:525.4px;top:470.97px;font-size:17.5px;font-weight:normal;color:#383838;font-family:'Liberation Sans';letter-spacing:-0.141px;">High School Ireland</div>
<div class="abs" style="left:1350.5px;top:474.57px;width:10px;height:10px;background:#6acb3a;border-radius:50%;"></div>
<div class="t" style="left:1365.8px;top:472.31px;font-size:16px;font-weight:normal;color:#3e3e3e;font-family:'Liberation Sans';letter-spacing:-0.148px;">Published</div>
<div class="t" style="left:1648.5px;top:471.59px;font-size:15.5px;font-weight:normal;color:#3e3e3e;font-family:'Liberation Sans';letter-spacing:0.026px;">10/06/2025, 12:30</div>
<div class="abs" style="left:396.5px;top:514.64px;width:1526.5px;height:1px;background:#ececec;"></div>
<svg style="left:408px;top:542.04px;" width="15" height="15" viewBox="0 0 15 15"><rect x="0.75" y="0.75" width="13.5" height="13.5" rx="3" fill="#fff" stroke="#777" stroke-width="1.3"/></svg>
<div class="abs" style="left:456.3px;top:526.24px;width:45px;height:45px;border-radius:5px;overflow:hidden"><svg style="position:static;display:block" width="45" height="45" viewBox="0 0 45 45"><defs><filter id="bl2" x="-5%" y="-5%" width="110%" height="110%"><feGaussianBlur stdDeviation="0.45"/></filter></defs><g filter="url(#bl2)"><defs><linearGradient id="g2" x1="0" y1="0" x2="0" y2="1"><stop offset="0" stop-color="#3f80e0"/><stop offset="0.4" stop-color="#7aa8e8"/><stop offset="1" stop-color="#7a88a0"/></linearGradient></defs><rect x="-2" y="-2" width="49" height="49" fill="url(#g2)"/><path d="M4 20v-8l3-2 2-6 3 3 3-6 4 6 3-3 2 5 2 2v9z" fill="#f0f0ee"/><rect x="0" y="18" width="45" height="10" fill="#6a9a6a"/><path d="M30 14h15v16H30z" fill="#d8c890"/><ellipse cx="10" cy="33" rx="11" ry="8" fill="#c8a860"/><rect x="0" y="38" width="45" height="7" fill="#8a98b0"/><path d="M16 45c0-8 3-12 7-12s6 4 6 12z" fill="#1e2438"/><path d="M27 45c0-9 3-14 7-14s7 5 7 14z" fill="#b0c0e0"/><circle cx="24" cy="30" r="2.5" fill="#caa080"/><circle cx="34" cy="29" r="2.5" fill="#d8b090"/></g></svg></div>
<div class="t" style="left:525.4px;top:540.04px;font-size:17.5px;font-weight:normal;color:#383838;font-family:'Liberation Sans';letter-spacing:-0.206px;">High School France</div>
<div class="abs" style="left:1350.5px;top:543.64px;width:10px;height:10px;background:#6acb3a;border-radius:50%;"></div>
<div class="t" style="left:1365.8px;top:541.38px;font-size:16px;font-weight:normal;color:#3e3e3e;font-family:'Liberation Sans';letter-spacing:-0.148px;">Published</div>
<div class="t" style="left:1648.5px;top:540.66px;font-size:15.5px;font-weight:normal;color:#3e3e3e;font-family:'Liberation Sans';letter-spacing:-0.030px;">10/06/2025, 12:29</div>
<div class="abs" style="left:396.5px;top:583.71px;width:1526.5px;height:1px;background:#ececec;"></div>
<svg style="left:408px;top:611.11px;" width="15" height="15" viewBox="0 0 15 15"><rect x="0.75" y="0.75" width="13.5" height="13.5" rx="3" fill="#fff" stroke="#777" stroke-width="1.3"/></svg>
<div class="abs" style="left:456.3px;top:595.31px;width:45px;height:45px;border-radius:5px;overflow:hidden"><svg style="position:static;display:block" width="45" height="45" viewBox="0 0 45 45"><defs><filter id="bl3" x="-5%" y="-5%" width="110%" height="110%"><feGaussianBlur stdDeviation="0.45"/></filter></defs><g filter="url(#bl3)"><rect x="-2" y="-2" width="49" height="49" fill="#d8d8d8"/><rect x="-2" y="-2" width="49" height="22" fill="#eaeaea"/><rect x="0" y="0" width="8" height="30" fill="#c8c8c4"/><path d="M30 0c3 6 8 8 15 6" stroke="#6a6a6a" stroke-width="1.2" fill="none"/><path d="M0 45l6-18h39v18z" fill="#b8b8b8"/><rect x="10" y="3" width="14" height="41" rx="1.5" fill="#d42626"/><rect x="12.5" y="9" width="9" height="27" fill="#f4eaea"/><path d="M12.5 13.5h9M12.5 18h9M12.5 22.5h9M12.5 27h9M12.5 31.5h9M17 9v27" stroke="#c82020" stroke-width="1.1"/><rect x="10" y="40" width="14" height="4" fill="#8a1a1a"/><path d="M26 12c3-4 10-4 12 1z" fill="#a8a0c0"/><circle cx="31" cy="16" r="2.5" fill="#3a2a22"/><path d="M27 38V21c0-2 2-3 4-3s4 1 4 3v17z" fill="#2e2e2e"/><path d="M28 38v6M33 38v6" stroke="#222" stroke-width="1.6"/></g></svg></div>
<div class="t" style="left:525.4px;top:609.11px;font-size:17.5px;font-weight:normal;color:#383838;font-family:'Liberation Sans';letter-spacing:-0.365px;">High School UK</div>
<div class="abs" style="left:1350.5px;top:612.71px;width:10px;height:10px;background:#f5d33f;border-radius:50%;"></div>
<div class="t" style="left:1365.8px;top:610.45px;font-size:16px;font-weight:normal;color:#3e3e3e;font-family:'Liberation Sans';letter-spacing:-0.066px;">Unpublished changes</div>
<div class="t" style="left:1648.5px;top:609.73px;font-size:15.5px;font-weight:normal;color:#3e3e3e;font-family:'Liberation Sans';letter-spacing:-0.030px;">10/06/2025, 12:29</div>
<div class="abs" style="left:396.5px;top:652.78px;width:1526.5px;height:1px;background:#ececec;"></div>
<svg style="left:408px;top:680.18px;" width="15" height="15" viewBox="0 0 15 15"><rect x="0.75" y="0.75" width="13.5" height="13.5" rx="3" fill="#fff" stroke="#777" stroke-width="1.3"/></svg>
<div class="abs" style="left:456.3px;top:664.38px;width:45px;height:45px;border-radius:5px;overflow:hidden"><svg style="position:static;display:block" width="45" height="45" viewBox="0 0 45 45"><defs><filter id="bl4" x="-5%" y="-5%" width="110%" height="110%"><feGaussianBlur stdDeviation="0.45"/></filter></defs><g filter="url(#bl4)"><rect x="-2" y="-2" width="49" height="49" fill="#707074"/><rect x="-2" y="-2" width="49" height="26" fill="#e4b41c"/><rect x="0" y="0" width="10" height="4" fill="#a8d0f0"/><rect x="3" y="6" width="6" height="8" fill="#3a4a58"/><rect x="11" y="5" width="7" height="9" fill="#3a4a58"/><rect x="20" y="4" width="7" height="10" fill="#3a4a58"/><rect x="29" y="3" width="6" height="11" fill="#485868"/><rect x="37" y="2" width="8" height="12" fill="#2a2a2a"/><rect x="0" y="17" width="45" height="4" fill="#c8901a"/><path d="M14 45c0-7 3-11 8-11s8 4 8 11z" fill="#7868d8"/><circle cx="17" cy="30" r="4.5" fill="#d8a888"/><rect x="15" y="36" width="6" height="9" fill="#c89878"/><circle cx="26" cy="24" r="2.3" fill="#4a3a30"/><path d="M23 40V27h6v13z" fill="#e8e8f0"/><circle cx="37" cy="24" r="2.6" fill="#5a3a28"/><path d="M33 42V30c0-2 2-3 4-3s4 1 4 3v12z" fill="#40b880"/><path d="M35 42v3M39 42v3" stroke="#7a9ad0" stroke-width="2"/><path d="M39 26l4-8" stroke="#d0a080" stroke-width="1.5"/></g></svg></div>
<div class="t" style="left:525.4px;top:678.18px;font-size:17.5px;font-weight:normal;color:#383838;font-family:'Liberation Sans';letter-spacing:-0.172px;">High School Canada</div>
<div class="abs" style="left:1350.5px;top:681.78px;width:10px;height:10px;background:#6acb3a;border-radius:50%;"></div>
<div class="t" style="left:1365.8px;top:679.52px;font-size:16px;font-weight:normal;color:#3e3e3e;font-family:'Liberation Sans';letter-spacing:-0.148px;">Published</div>
<div class="t" style="left:1648.5px;top:678.80px;font-size:15.5px;font-weight:normal;color:#3e3e3e;font-family:'Liberation Sans';letter-spacing:-0.462px;">10/01/2025, 10:41</div>
<div class="abs" style="left:396.5px;top:721.85px;width:1526.5px;height:1px;background:#ececec;"></div>
<svg style="left:408px;top:749.25px;" width="15" height="15" viewBox="0 0 15 15"><rect x="0.75" y="0.75" width="13.5" height="13.5" rx="3" fill="#fff" stroke="#777" stroke-width="1.3"/></svg>
<div class="abs" style="left:456.3px;top:733.45px;width:45px;height:45px;border-radius:5px;overflow:hidden"><svg style="position:static;display:block" width="45" height="45" viewBox="0 0 45 45"><defs><filter id="bl5" x="-5%" y="-5%" width="110%" height="110%"><feGaussianBlur stdDeviation="0.45"/></filter></defs><g filter="url(#bl5)"><defs><linearGradient id="g5" x1="0" y1="0" x2="0" y2="1"><stop offset="0" stop-color="#9cc4f0"/><stop offset="1" stop-color="#e0e8f0"/></linearGradient></defs><rect x="-2" y="-2" width="49" height="49" fill="url(#g5)"/><rect x="0" y="16" width="45" height="14" fill="#ecebe6"/><path d="M0 6c5-4 10-2 13 4M2 10c3-5 9-6 12-1M30 6c5-4 11-3 15 2M32 10c4-3 9-2 12 2M16 5c4-4 10-3 13 2" stroke="#3e7a34" stroke-width="3" fill="none"/><path d="M7 10v22M38 10v22" stroke="#6a5a40" stroke-width="1"/><path d="M18 34l2-24c1-2 4-2 5 0l2 24z" fill="#8c6a48"/><ellipse cx="22.5" cy="34" rx="19" ry="4.5" fill="#2848b0"/><path d="M3 35h39l-1 7c-8 3-29 3-37 0z" fill="#9c6a3e"/><path d="M8 39h28" stroke="#d8b878" stroke-width="1.2"/><rect x="0" y="42" width="45" height="3" fill="#d8d0c4"/><path d="M0 36l8 9H0z" fill="#e0dcd4"/></g></svg></div>
<div class="t" style="left:525.4px;top:747.25px;font-size:17.5px;font-weight:normal;color:#383838;font-family:'Liberation Sans';letter-spacing:-0.162px;">High School Spain</div>
<div class="abs" style="left:1350.5px;top:750.85px;width:10px;height:10px;background:#6acb3a;border-radius:50%;"></div>
<div class="t" style="left:1365.8px;top:748.59px;font-size:16px;font-weight:normal;color:#3e3e3e;font-family:'Liberation Sans';letter-spacing:-0.148px;">Published</div>
<div class="t" style="left:1648.5px;top:747.87px;font-size:15.5px;font-weight:normal;color:#3e3e3e;font-family:'Liberation Sans';letter-spacing:0.395px;">09/29/2025, 09:48</div>
<div class="abs" style="left:396.5px;top:790.92px;width:1526.5px;height:1px;background:#ececec;"></div>
<svg style="left:408px;top:818.32px;" width="15" height="15" viewBox="0 0 15 15"><rect x="0.75" y="0.75" width="13.5" height="13.5" rx="3" fill="#fff" stroke="#777" stroke-width="1.3"/></svg>
<div class="abs" style="left:456.3px;top:802.52px;width:45px;height:45px;border-radius:5px;overflow:hidden"><svg style="position:static;display:block" width="45" height="45" viewBox="0 0 45 45"><defs><filter id="bl6" x="-5%" y="-5%" width="110%" height="110%"><feGaussianBlur stdDeviation="0.45"/></filter></defs><g filter="url(#bl6)"><defs><linearGradient id="g6" x1="0" y1="0" x2="0" y2="1"><stop offset="0" stop-color="#3a72d4"/><stop offset="0.25" stop-color="#b8cce8"/><stop offset="0.32" stop-color="#8a7a62"/><stop offset="0.6" stop-color="#9a8a70"/><stop offset="1" stop-color="#c0ac88"/></linearGradient></defs><rect x="-2" y="-2" width="49" height="49" fill="url(#g6)"/><path d="M0 16c4-3 8-1 12-3s9-2 14 0 9 1 12-1 5 0 7 1v10H0z" fill="#5a4a3a"/><ellipse cx="9" cy="30" rx="9" ry="6" fill="#6e5c48"/><ellipse cx="36" cy="24" rx="9" ry="5" fill="#7a6a54"/><path d="M24 29l12-2 1 9-12 2z" fill="#a8c8f0"/><path d="M24.5 32l12-2" stroke="#f4f4f4" stroke-width="2.2"/><path d="M25 30v15" stroke="#222" stroke-width="1"/><rect x="26" y="36" width="3" height="9" fill="#2a2a38"/></g></svg></div>
<div class="t" style="left:525.4px;top:816.32px;font-size:17.5px;font-weight:normal;color:#383838;font-family:'Liberation Sans';letter-spacing:0.016px;">High School Argentina</div>
<div class="abs" style="left:1350.5px;top:819.92px;width:10px;height:10px;background:#f5d33f;border-radius:50%;"></div>
<div class="t" style="left:1365.8px;top:817.66px;font-size:16px;font-weight:normal;color:#3e3e3e;font-family:'Liberation Sans';letter-spacing:-0.066px;">Unpublished changes</div>
<div class="t" style="left:1648.5px;top:816.94px;font-size:15.5px;font-weight:normal;color:#3e3e3e;font-family:'Liberation Sans';letter-spacing:0.182px;">09/28/2025, 14:34</div>
<div class="abs" style="left:396.5px;top:859.99px;width:1526.5px;height:1px;background:#ececec;"></div>
<svg style="left:408px;top:887.39px;" width="15" height="15" viewBox="0 0 15 15"><rect x="0.75" y="0.75" width="13.5" height="13.5" rx="3" fill="#fff" stroke="#777" stroke-width="1.3"/></svg>
<div class="abs" style="left:456.3px;top:871.59px;width:45px;height:45px;border-radius:5px;overflow:hidden"><svg style="position:static;display:block" width="45" height="45" viewBox="0 0 45 45"><defs><filter id="bl7" x="-5%" y="-5%" width="110%" height="110%"><feGaussianBlur stdDeviation="0.45"/></filter></defs><g filter="url(#bl7)"><rect x="-2" y="-2" width="49" height="49" fill="#d8d0cc"/><circle cx="6" cy="10" r="6" fill="#3aa89a"/><circle cx="14" cy="6" r="5" fill="#5868c0"/><circle cx="24" cy="8" r="8" fill="#f0a038"/><circle cx="36" cy="6" r="6" fill="#8a3a98"/><circle cx="43" cy="16" r="5" fill="#48a0b0"/><circle cx="22" cy="21" r="7" fill="#f4ece4"/><circle cx="19.5" cy="20" r="1.5" fill="#333"/><circle cx="24.5" cy="20" r="1.5" fill="#333"/><circle cx="5" cy="26" r="6" fill="#d85838"/><circle cx="36" cy="25" r="6" fill="#40a070"/><circle cx="9" cy="40" r="6" fill="#3a70c8"/><circle cx="28" cy="40" r="7" fill="#c82850"/><circle cx="41" cy="38" r="6" fill="#2e5ab8"/><path d="M14 44l14-16" stroke="#f8f0e8" stroke-width="2.5"/><circle cx="15" cy="31" r="4" fill="#e87060"/></g></svg></div>
<div class="t" style="left:525.4px;top:885.39px;font-size:17.5px;font-weight:normal;color:#383838;font-family:'Liberation Sans';letter-spacing:-0.197px;">High School Mexico</div>
<div class="abs" style="left:1350.5px;top:888.99px;width:10px;height:10px;background:#6acb3a;border-radius:50%;"></div>
<div class="t" style="left:1365.8px;top:886.73px;font-size:16px;font-weight:normal;color:#3e3e3e;font-family:'Liberation Sans';letter-spacing:-0.148px;">Published</div>
<div class="t" style="left:1648.5px;top:886.01px;font-size:15.5px;font-weight:normal;color:#3e3e3e;font-family:'Liberation Sans';letter-spacing:0.163px;">09/26/2025, 15:43</div>
<div class="abs" style="left:396.5px;top:929.06px;width:1526.5px;height:1px;background:#ececec;"></div>
<svg style="left:408px;top:956.46px;" width="15" height="15" viewBox="0 0 15 15"><rect x="0.75" y="0.75" width="13.5" height="13.5" rx="3" fill="#fff" stroke="#777" stroke-width="1.3"/></svg>
<div class="abs" style="left:456.3px;top:940.66px;width:45px;height:45px;border-radius:5px;overflow:hidden"><svg style="position:static;display:block" width="45" height="45" viewBox="0 0 45 45"><defs><filter id="bl8" x="-5%" y="-5%" width="110%" height="110%"><feGaussianBlur stdDeviation="0.45"/></filter></defs><g filter="url(#bl8)"><rect x="-2" y="-2" width="49" height="49" fill="#dde2e4"/><rect x="-2" y="-2" width="49" height="10" fill="#f2f4f4"/><path d="M0 8c6-4 12-5 18-2s10 2 15 1 8 0 12 1v8H0z" fill="#2e4a34"/><rect x="0" y="15" width="45" height="2" fill="#4a6a50"/><path d="M15 45V30c0-4 3-7 7-7s7 3 7 7v15z" fill="#3a3e32"/><path d="M17 27L9 11M27 27l7-15" stroke="#2a2e26" stroke-width="3.2" stroke-linecap="round"/><circle cx="22" cy="21" r="3.2" fill="#3a3028"/><rect x="16.5" y="26" width="11" height="11" rx="2" fill="#4e5a40"/><path d="M19 26l3 5 3-5" fill="#d8c8a8"/></g></svg></div>
<div class="t" style="left:525.4px;top:954.46px;font-size:17.5px;font-weight:normal;color:#383838;font-family:'Liberation Sans';letter-spacing:-0.204px;">High School Sweden</div>
<div class="abs" style="left:1350.5px;top:958.06px;width:10px;height:10px;background:#6acb3a;border-radius:50%;"></div>
<div class="t" style="left:1365.8px;top:955.80px;font-size:16px;font-weight:normal;color:#3e3e3e;font-family:'Liberation Sans';letter-spacing:-0.148px;">Published</div>
<div class="t" style="left:1648.5px;top:955.08px;font-size:15.5px;font-weight:normal;color:#3e3e3e;font-family:'Liberation Sans';letter-spacing:0.163px;">09/26/2025, 15:43</div>
<div class="abs" style="left:396.5px;top:998.13px;width:1526.5px;height:1px;background:#ececec;"></div>
<svg style="left:408px;top:1025.53px;" width="15" height="15" viewBox="0 0 15 15"><rect x="0.75" y="0.75" width="13.5" height="13.5" rx="3" fill="#fff" stroke="#777" stroke-width="1.3"/></svg>
<div class="abs" style="left:456.3px;top:1009.73px;width:45px;height:45px;border-radius:5px;overflow:hidden"><svg style="position:static;display:block" width="45" height="45" viewBox="0 0 45 45"><defs><filter id="bl9" x="-5%" y="-5%" width="110%" height="110%"><feGaussianBlur stdDeviation="0.45"/></filter></defs><g filter="url(#bl9)"><defs><linearGradient id="g9" x1="0" y1="0" x2="0" y2="1"><stop offset="0" stop-color="#86a6e6"/><stop offset="0.45" stop-color="#c8d6f0"/><stop offset="0.5" stop-color="#e8eef8"/><stop offset="1" stop-color="#f0f4fa"/></linearGradient></defs><rect x="-2" y="-2" width="49" height="49" fill="url(#g9)"/><path d="M30 0v34" stroke="#e8e8ee" stroke-width="0.8"/><path d="M14 45L40 32M20 45l22-10" stroke="#4a4a5a" stroke-width="1.2"/><circle cx="10" cy="19" r="4" fill="#b83838"/><circle cx="11" cy="22" r="3" fill="#e8c8b0"/><path d="M3 45c0-10 3-18 9-18s8 8 8 18z" fill="#f4f6fa"/><path d="M5 32l6 4" stroke="#4878c8" stroke-width="2"/><circle cx="24" cy="17" r="2.3" fill="#c08060"/><path d="M21 33l1-13h5l1 13z" fill="#283a80"/><path d="M22 33l-1 6M27 33l1 6" stroke="#222" stroke-width="1.6"/><circle cx="35" cy="19" r="2.5" fill="#e0c090"/><path d="M31 34l1-12h6l1 12z" fill="#58a8a0"/><path d="M33 34l-1 8M37 34l1 8" stroke="#333" stroke-width="1.6"/></g></svg></div>
<div class="t" style="left:525.4px;top:1023.53px;font-size:17.5px;font-weight:normal;color:#383838;font-family:'Liberation Sans';letter-spacing:-0.179px;">High School Norway</div>
<div class="abs" style="left:1350.5px;top:1027.13px;width:10px;height:10px;background:#6acb3a;border-radius:50%;"></div>
<div class="t" style="left:1365.8px;top:1024.87px;font-size:16px;font-weight:normal;color:#3e3e3e;font-family:'Liberation Sans';letter-spacing:-0.148px;">Published</div>
<div class="t" style="left:1648.5px;top:1024.15px;font-size:15.5px;font-weight:normal;color:#3e3e3e;font-family:'Liberation Sans';letter-spacing:0.120px;">09/26/2025, 15:39</div>
<div class="abs" style="left:396.5px;top:1067.2px;width:1526.5px;height:1px;background:#ececec;"></div>
<svg style="left:408px;top:1094.6px;" width="15" height="15" viewBox="0 0 15 15"><rect x="0.75" y="0.75" width="13.5" height="13.5" rx="3" fill="#fff" stroke="#777" stroke-width="1.3"/></svg>
<div class="abs" style="left:456.3px;top:1078.80px;width:45px;height:45px;border-radius:5px;overflow:hidden"><svg style="position:static;display:block" width="45" height="45" viewBox="0 0 45 45"><defs><filter id="bl10" x="-5%" y="-5%" width="110%" height="110%"><feGaussianBlur stdDeviation="0.45"/></filter></defs><g filter="url(#bl10)"><defs><linearGradient id="g10" x1="0" y1="0" x2="0" y2="1"><stop offset="0" stop-color="#eaeef2"/><stop offset="0.15" stop-color="#e4e8ec"/><stop offset="1" stop-color="#b0b0a8"/></linearGradient></defs><rect x="-2" y="-2" width="49" height="49" fill="url(#g10)"/><rect x="0" y="9" width="7" height="12" fill="#d86a50"/><rect x="7" y="8" width="8" height="13" fill="#e8c040"/><rect x="15" y="10" width="7" height="11" fill="#78a8c0"/><rect x="22" y="9" width="8" height="12" fill="#e89048"/><rect x="30" y="10" width="8" height="11" fill="#c85a48"/><rect x="38" y="11" width="7" height="10" fill="#e0d0b0"/><path d="M8 0v20M20 2v18" stroke="#9a9a9a" stroke-width="0.8"/><rect x="0" y="20" width="45" height="4" fill="#f0f0f0"/><path d="M0 24h45v6L0 45z" fill="#4e5860"/><path d="M0 45l45-15v15z" fill="#8a8478"/><path d="M2 42l43-14" stroke="#c8a848" stroke-width="1"/><circle cx="33" cy="13" r="2.6" fill="#3a2a20"/><path d="M29 27V17h8v10z" fill="#d03a28"/><path d="M30 27l-1 9M36 27l1 9" stroke="#2a2a2a" stroke-width="1.8"/></g></svg></div>
<div class="t" style="left:525.4px;top:1092.60px;font-size:17.5px;font-weight:normal;color:#383838;font-family:'Liberation Sans';letter-spacing:-0.112px;">High School Denmark</div>
<div class="abs" style="left:1350.5px;top:1096.2px;width:10px;height:10px;background:#6acb3a;border-radius:50%;"></div>
<div class="t" style="left:1365.8px;top:1093.94px;font-size:16px;font-weight:normal;color:#3e3e3e;font-family:'Liberation Sans';letter-spacing:-0.148px;">Published</div>
<div class="t" style="left:1648.5px;top:1093.22px;font-size:15.5px;font-weight:normal;color:#3e3e3e;font-family:'Liberation Sans';letter-spacing:0.095px;">09/26/2025, 15:37</div>
<div class="abs" style="left:396.5px;top:1136.27px;width:1526.5px;height:1px;background:#ececec;"></div>
<svg style="left:408px;top:1163.67px;" width="15" height="15" viewBox="0 0 15 15"><rect x="0.75" y="0.75" width="13.5" height="13.5" rx="3" fill="#fff" stroke="#777" stroke-width="1.3"/></svg>
<div class="abs" style="left:456.3px;top:1147.87px;width:45px;height:45px;border-radius:5px;overflow:hidden"><svg style="position:static;display:block" width="45" height="45" viewBox="0 0 45 45"><defs><filter id="bl11" x="-5%" y="-5%" width="110%" height="110%"><feGaussianBlur stdDeviation="0.45"/></filter></defs><g filter="url(#bl11)"><rect x="-2" y="-2" width="49" height="49" fill="#d4d0c8"/><rect x="-2" y="-2" width="49" height="18" fill="#2e4a2a"/><path d="M0 0c10 4 20 2 30 0" stroke="#4a6a38" stroke-width="6" fill="none"/><rect x="4" y="9" width="14" height="8" fill="#e8e8e8"/><rect x="31" y="8" width="14" height="12" fill="#e4b418"/><rect x="33" y="10" width="10" height="3" fill="#2a3a48"/><rect x="-2" y="16" width="49" height="9" fill="#5e9a48"/><path d="M0 25h45v20H0z" fill="#d8d4cc"/><path d="M12 45l8-20h6l8 20z" fill="#c8c4bc"/><path d="M22 5v20" stroke="#6a6a60" stroke-width="1"/><circle cx="22" cy="14" r="2.4" fill="#4a3020"/><path d="M19 25V17h6v8z" fill="#c43a6a"/><path d="M19 25h6v5h-6z" fill="#f4f4f4"/><path d="M20 30l-1 7M24 30l1 7" stroke="#3a3a3a" stroke-width="1.6"/><path d="M20 38l8 4" stroke="#8a8a80" stroke-width="2"/></g></svg></div>
<div class="t" style="left:525.4px;top:1161.67px;font-size:17.5px;font-weight:normal;color:#383838;font-family:'Liberation Sans';letter-spacing:-0.366px;">High School USA</div>
<div class="abs" style="left:1350.5px;top:1165.27px;width:10px;height:10px;background:#6acb3a;border-radius:50%;"></div>
<div class="t" style="left:1365.8px;top:1163.01px;font-size:16px;font-weight:normal;color:#3e3e3e;font-family:'Liberation Sans';letter-spacing:-0.148px;">Published</div>
<div class="t" style="left:1648.5px;top:1162.29px;font-size:15.5px;font-weight:normal;color:#3e3e3e;font-family:'Liberation Sans';letter-spacing:0.120px;">09/26/2025, 15:07</div>
<div class="abs" style="left:396.5px;top:1205.34px;width:1526.5px;height:1px;background:#ececec;"></div>
<svg style="left:408px;top:1232.74px;" width="15" height="15" viewBox="0 0 15 15"><rect x="0.75" y="0.75" width="13.5" height="13.5" rx="3" fill="#fff" stroke="#777" stroke-width="1.3"/></svg>
<div class="abs" style="left:456.3px;top:1216.94px;width:45px;height:45px;border-radius:5px;overflow:hidden"><svg style="position:static;display:block" width="45" height="45" viewBox="0 0 45 45"><defs><filter id="bl12" x="-5%" y="-5%" width="110%" height="110%"><feGaussianBlur stdDeviation="0.45"/></filter></defs><g filter="url(#bl12)"><rect x="-2" y="-2" width="49" height="49" fill="#707074"/><rect x="-2" y="-2" width="49" height="24" fill="#e4b41c"/><rect x="0" y="0" width="8" height="3" fill="#a8d0f0"/><rect x="3" y="5" width="6" height="9" fill="#3a4a58"/><rect x="11" y="4" width="7" height="10" fill="#3a4a58"/><rect x="20" y="3" width="7" height="11" fill="#3a4a58"/><rect x="29" y="2" width="6" height="12" fill="#485868"/><rect x="37" y="1" width="8" height="13" fill="#2a2a2a"/><rect x="0" y="16" width="45" height="4" fill="#c8901a"/><path d="M11 45c0-7 3-10 7-10s8 3 8 10z" fill="#7868d8"/><circle cx="14" cy="31" r="4.5" fill="#d8a888"/><circle cx="22" cy="23" r="2.3" fill="#4a3a30"/><path d="M20 40V26h5v14z" fill="#e8e8f0"/><circle cx="36" cy="22" r="2.6" fill="#5a3a28"/><path d="M32 40V28c0-2 2-3 4-3s4 1 4 3v12z" fill="#40b880"/><path d="M34 40v5M38 40v5" stroke="#7a9ad0" stroke-width="2"/><path d="M38 24l4-8" stroke="#d0a080" stroke-width="1.5"/><circle cx="29" cy="25" r="2.3" fill="#3a2a20"/><path d="M27 40V28h5v12z" fill="#333"/></g></svg></div>
<div class="t" style="left:525.4px;top:1230.74px;font-size:17.5px;font-weight:normal;color:#383838;font-family:'Liberation Sans';letter-spacing:-0.321px;">High School Canada FR</div>
<div class="abs" style="left:1350.5px;top:1234.34px;width:10px;height:10px;background:#6acb3a;border-radius:50%;"></div>
<div class="t" style="left:1365.8px;top:1232.08px;font-size:16px;font-weight:normal;color:#3e3e3e;font-family:'Liberation Sans';letter-spacing:-0.148px;">Published</div>
<div class="t" style="left:1648.5px;top:1231.36px;font-size:15.5px;font-weight:normal;color:#3e3e3e;font-family:'Liberation Sans';letter-spacing:-0.062px;">09/16/2025, 16:35</div>
<div class="abs" style="left:396.5px;top:1274.41px;width:1526.5px;height:1px;background:#ececec;"></div>
<svg style="left:408px;top:1301.81px;" width="15" height="15" viewBox="0 0 15 15"><rect x="0.75" y="0.75" width="13.5" height="13.5" rx="3" fill="#fff" stroke="#777" stroke-width="1.3"/></svg>
<div class="abs" style="left:456.3px;top:1286.01px;width:45px;height:45px;border-radius:5px;overflow:hidden"><svg style="position:static;display:block" width="45" height="45" viewBox="0 0 45 45"><defs><filter id="bl13" x="-5%" y="-5%" width="110%" height="110%"><feGaussianBlur stdDeviation="0.45"/></filter></defs><g filter="url(#bl13)"><rect x="-2" y="-2" width="49" height="49" fill="#2c2a26"/><rect x="-2" y="-2" width="49" height="8" fill="#3e3c36"/><rect x="0" y="6" width="45" height="2" fill="#6a665c"/><rect x="36" y="8" width="9" height="37" fill="#9a968a"/><rect x="-2" y="10" width="7" height="35" fill="#8a7a60"/><rect x="6" y="9" width="30" height="32" fill="#141412"/><circle cx="20" cy="17" r="2.8" fill="#d8c8b8"/><path d="M13 36c0-10 3-16 7-16s6 6 6 16z" fill="#ececec"/><path d="M10 31l6 3" stroke="#e0e0e0" stroke-width="3"/><circle cx="28" cy="19" r="2.8" fill="#c8b8a8"/><path d="M23 37V25c0-2 2-3 5-3s5 1 5 3v12z" fill="#f2f2f2"/><path d="M16 36v6M27 37v6" stroke="#222" stroke-width="2"/><rect x="-2" y="41" width="49" height="6" fill="#4a5a42"/><rect x="6" y="41" width="30" height="4" fill="#b8b0a0"/></g></svg></div>
<div class="t" style="left:525.4px;top:1299.81px;font-size:17.5px;font-weight:normal;color:#383838;font-family:'Liberation Sans';letter-spacing:-0.057px;">High School Japan</div>
<div class="abs" style="left:1350.5px;top:1303.41px;width:10px;height:10px;background:#6acb3a;border-radius:50%;"></div>
<div class="t" style="left:1365.8px;top:1301.15px;font-size:16px;font-weight:normal;color:#3e3e3e;font-family:'Liberation Sans';letter-spacing:-0.148px;">Published</div>
<div class="t" style="left:1648.5px;top:1300.43px;font-size:15.5px;font-weight:normal;color:#3e3e3e;font-family:'Liberation Sans';letter-spacing:-0.024px;">09/15/2025, 16:02</div>
<div class="abs" style="left:396.5px;top:1343.48px;width:1526.5px;height:1px;background:#ececec;"></div>
<div class="abs" style="left:456.3px;top:1355.08px;width:45px;height:45px;border-radius:5px;overflow:hidden"><svg style="position:static;display:block" width="45" height="45" viewBox="0 0 45 45"><defs><filter id="bl14" x="-5%" y="-5%" width="110%" height="110%"><feGaussianBlur stdDeviation="0.45"/></filter></defs><g filter="url(#bl14)"><rect x="-2" y="-2" width="49" height="49" fill="#3a4a38"/><rect x="0" y="0" width="14" height="12" fill="#1a1a18"/><circle cx="8" cy="4" r="5" fill="#222"/><rect x="14" y="0" width="10" height="12" fill="#6a8a5a"/><rect x="26" y="0" width="19" height="12" fill="#c89868"/><circle cx="36" cy="6" r="6" fill="#d8a878"/></g></svg></div>
</div>
</body></html>
